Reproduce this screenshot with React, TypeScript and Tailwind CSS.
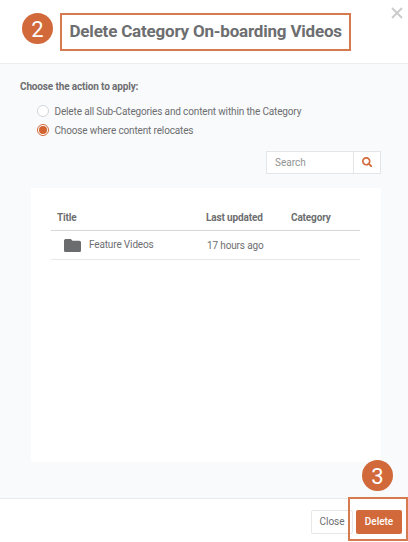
import { FaSearch } from "react-icons/fa";

type Row = {
  title: string;
  updated: string;
  category: string;
};

const rows: Row[] = [
  { title: "Feature Videos", updated: "17 hours ago", category: "" },
];

function FolderIcon() {
  return (
    <svg
      viewBox="2 4 20 16"
      preserveAspectRatio="none"
      className="mt-px h-[13px] w-[17px] shrink-0"
      fill="#6b6c6e"
    >
      <path d="M10 4H4c-1.1 0-1.99.9-1.99 2L2 18c0 1.1.9 2 2 2h16c1.1 0 2-.9 2-2V8c0-1.1-.9-2-2-2h-8l-2-2z" />
    </svg>
  );
}

function StepBadge({ value }: { value: string }) {
  return (
    <span className="flex h-[31px] w-[31px] items-center justify-center rounded-full bg-[#d2693a] pt-[2px] text-[22px] leading-none tracking-normal text-white">
      {value}
    </span>
  );
}

function Radio({ checked, label }: { checked?: boolean; label: string }) {
  return (
    <label className="flex h-[19px] items-center">
      <span
        className={
          checked
            ? "flex h-3 w-3 items-center justify-center rounded-full border border-[#d2693a] bg-white"
            : "flex h-3 w-3 items-center justify-center rounded-full border border-[#d3d4d6] bg-white"
        }
      >
        {checked && <span className="h-2 w-2 rounded-full bg-[#d2622f]" />}
      </span>
      <span className="mt-px ml-[5.5px] whitespace-nowrap">{label}</span>
    </label>
  );
}

export default function App() {
  return (
    <div className="relative flex h-[542px] w-[408px] flex-col overflow-hidden bg-white font-['Roboto',sans-serif] text-[10px] tracking-[-0.145px] text-[#6d6e70]">
      <header className="flex h-16 shrink-0 items-start border-b border-[#eceef0] pt-[13px] pl-[22px]">
        <StepBadge value="2" />
        <h1 className="ml-[7px] flex h-[38px] w-[291px] items-center border-2 border-[#d67a50] pl-[7.5px] text-[17px] font-bold tracking-[-0.2px] whitespace-nowrap">
          Delete Category On-boarding Videos
        </h1>
        <svg viewBox="0 0 12 12" className="mt-[-6px] ml-[40px] h-3 w-3" stroke="#cbcbcb" strokeWidth="1.9">
          <path d="M1 1l10 10M11 1L1 11" />
        </svg>
      </header>

      <main className="flex h-[434px] shrink-0 flex-col bg-[#f9fafc] pt-[15px] pr-[27px] pl-[20px]">
        <p className="h-4 leading-4 font-bold">Choose the action to apply:</p>
        <div className="mt-[6px] ml-[17px]">
          <Radio label="Delete all Sub-Categories and content within the Category" />
          <Radio checked label="Choose where content relocates" />
        </div>

        <div className="mt-[12px] flex h-[23px] w-[115px] self-end border border-[#e4e5e7] bg-white">
          <span className="flex w-[87px] items-center border-r border-[#e4e5e7] pl-2 tracking-normal text-[#919294]">
            Search
          </span>
          <span className="flex flex-1 items-center justify-center pb-px">
            <FaSearch size={10.5} color="#d2693a" />
          </span>
        </div>

        <section className="mt-[14px] ml-[11px] h-[274px] bg-white px-5 pt-[17px]">
          <table className="w-[309px] table-fixed border-collapse text-left">
            <thead>
              <tr className="h-[25px] border-b border-[#d6d7d8]">
                <th className="w-[155px] pl-[6px] font-bold">Title</th>
                <th className="w-[85px] font-bold">Last updated</th>
                <th className="font-bold">Category</th>
              </tr>
            </thead>
            <tbody>
              {rows.map((row) => (
                <tr key={row.title} className="h-[29px] border-b border-[#e8e8e9]">
                  <td className="pl-[12.5px]">
                    <div className="flex items-center">
                      <FolderIcon />
                      <span className="ml-[8.5px]">{row.title}</span>
                    </div>
                  </td>
                  <td className="pt-[2px] pl-[1px]">{row.updated}</td>
                  <td>{row.category}</td>
                </tr>
              ))}
            </tbody>
          </table>
        </section>
      </main>

      <footer className="flex flex-1 items-start justify-end border-t border-[#e9eaec] pt-[11px] pr-[6px] tracking-normal">
        <button className="h-6 w-[42px] rounded-[2px] border border-[#e7e7e8] pb-px">Close</button>
        <button className="ml-[3px] h-6 w-[46px] rounded-[2px] bg-[#d2693a] pb-px font-medium text-white">
          Delete
        </button>
      </footer>

      {/* callout around the delete button */}
      <div className="absolute top-[497px] left-[348px] h-[44px] w-[60px] border-2 border-[#d67a50]" />
      <div className="absolute top-[460px] left-[362px]">
        <StepBadge value="3" />
      </div>
    </div>
  );
}
